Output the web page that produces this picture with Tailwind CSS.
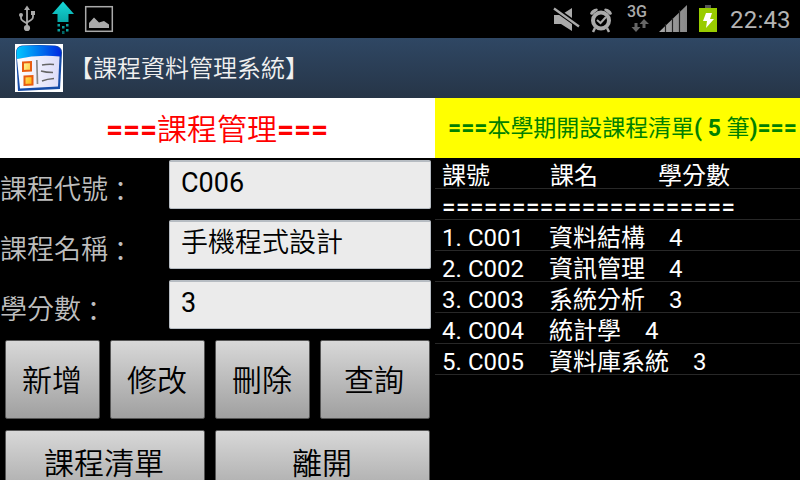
<!DOCTYPE html>
<html lang="zh-Hant">
<head>
<meta charset="utf-8">
<title>課程資料管理系統</title>
<script src="https://cdn.jsdelivr.net/npm/@tailwindcss/browser@4"></script>
</head>
<body class="w-[800px] h-[480px] overflow-hidden bg-black text-white font-['Roboto','Noto_Sans_CJK_TC',sans-serif]">
<div class="flex h-[480px] flex-col overflow-hidden">
  <!-- Status bar -->
  <header class="flex h-[38px] shrink-0 items-start justify-between bg-black">
    <svg class="h-[38px] w-[130px]" viewBox="0 0 130 38" fill="none">
      <defs><linearGradient id="up" x1="0" y1="0" x2="0" y2="1"><stop offset="0" stop-color="#16d8d8"/><stop offset="1" stop-color="#08a8a8"/></linearGradient></defs>
      <g stroke="#aaa" stroke-width="1.800"><path d="M27 9v18M21 15v3q0 2 2 3l4 2.500M33 14v3q0 2-2 3l-4 2.500"/></g>
      <g fill="#aaa"><path d="M27 5.500l3 4.500h-6z"/><circle cx="27" cy="28" r="3.100"/><circle cx="21" cy="15" r="2"/><path d="M31 11h4v4h-4z"/></g>
      <path d="M63 1.500L74 14h-5.500v8h-11v-8H52z" fill="url(#up)"/>
      <g fill="#0aa0a0"><path d="M57.500 24H60v2.500h-2.500zM66 24h2.500v2.500H66zM62 26h2.500v2.500H62zM57.500 29H60v2.500h-2.500zM66 29h2.500v2.500H66z"/><path fill="#066" d="M62 31h2.500v3H62z"/></g>
      <rect x="85.700" y="6.700" width="26.600" height="24.600" stroke="#aaa" stroke-width="1.500"/>
      <path d="M89 28v-5l5-5.500 5 5 5-1.500 5 3.500v3.500z" fill="#aaa"/>
    </svg>
    <div class="flex h-[38px]">
      <svg class="h-[38px] w-[70px]" viewBox="550 0 70 38" fill="none">
        <path d="M554 15h7l11-7v23l-11-7h-7z" fill="#aaa"/>
        <path d="M555 9l24 17" stroke="#000" stroke-width="5"/><path d="M554 8.500l25 18" stroke="#aaa" stroke-width="2.300"/>
        <circle cx="601" cy="20.500" r="8" stroke="#aaa" stroke-width="4"/>
        <path d="M597 20l3.500 3 5.500-6" stroke="#aaa" stroke-width="2"/>
        <path d="M590 14q1-5 7-5.500l1 1.500-6 5zM612 14q-1-5-7-5.500l-1 1.500 6 5z" fill="#aaa"/>
        <path d="M595 28l-2 4M607 28l2 4" stroke="#aaa" stroke-width="2.500"/>
      </svg>
      <div class="flex w-[35px] flex-col pl-[7px]">
        <span class="mt-[3px] h-[16px] text-[16px] leading-[18px] font-medium text-[#aaa]">3G</span>
        <svg class="h-[14px] w-[22px]" viewBox="0 0 22 14" fill="#666"><path d="M7.500 4h3v4h3L9 13 4.500 8h3zM15.500 9h3V5H22l-5-5-4.500 5h3z"/></svg>
      </div>
      <svg class="h-[38px] w-[75px]" viewBox="655 0 75 38">
        <defs><linearGradient id="sg" x1="0" x2="1"><stop offset="0" stop-color="#aaa"/><stop offset="1" stop-color="#888"/></linearGradient></defs>
        <path d="M659 32L687 5v27z" fill="url(#sg)"/>
        <path d="M665.500 24v8M672.500 18v14M679.500 10v22" stroke="#222" stroke-width="1.200"/>
        <path d="M705 5h6v3h-6z" fill="#555"/><path d="M699 8h18v24h-18z" fill="#99cc00"/>
        <path d="M706 13h6l-2 6h4l-8 9 1-7h-4z" fill="#fff"/>
      </svg>
      <time class="w-[70px] whitespace-nowrap text-[24px] leading-[41px] tracking-[0.200px] text-[#b4b4b4]">22:43</time>
    </div>
  </header>
  <!-- Title bar -->
  <div class="flex h-[60px] shrink-0 items-center bg-linear-to-b from-[#2f4764] to-[#263547] pl-[15px]">
    <svg class="h-[48px] w-[48px]" viewBox="0 0 48 48">
      <defs><linearGradient id="bl"><stop offset="0" stop-color="#00c8ff"/><stop offset="1" stop-color="#0028e0"/></linearGradient>
      <linearGradient id="pg"><stop offset="0" stop-color="#fff"/><stop offset="1" stop-color="#dcdcf8"/></linearGradient>
      <linearGradient id="or" x2="1" y2="1"><stop offset="0" stop-color="#fff8a0"/><stop offset="1" stop-color="#ffb000"/></linearGradient></defs>
      <path fill="#fff" d="M0 0h48v48H0z"/>
      <path d="M1 9Q1 2 7 1.500q17-1 33 0 7 1 7 7L45 45 3 47z" fill="#164ca8"/>
      <path d="M1.500 9Q1.500 2 8 2q16-1 31 0 7 1 7 6.500v4Q24 11 2 15z" fill="url(#bl)"/>
      <path d="M2 15Q24 10 44.500 12.500L43 42.500 5 44.500z" fill="url(#pg)"/>
      <path d="M8 18.500l8-.5v8.500l-8 .5zM9.500 32.500l8-.5v8.500l-8 .5z" fill="url(#or)" stroke="#e85c10" stroke-width="2"/>
      <path d="M21.800 16l.7 24" stroke="#888" stroke-width="1.700"/>
      <path d="M27 21q6-1 12-.5M26 27q5 1.500 12 1.500M27 37q5-2 12-2.500" stroke="#666" stroke-width="1.500" fill="none"/>
    </svg>
    <h1 class="ml-[6px] pt-[2px] text-[24px] leading-[58px] font-[350] text-[#f0f0f0]">【課程資料管理系統】</h1>
  </div>
  <main class="flex min-h-0 grow">
    <!-- Course form -->
    <section class="w-[435px] shrink-0">
      <h2 class="flex h-[60px] items-center justify-center bg-white pt-[3px] pr-[1px] text-[30px] leading-[60px] font-[350] text-[#f00]"><b class="font-bold tracking-[-0.200px]">===</b>課程管理<b class="font-bold tracking-[-0.200px]">===</b></h2>
      <form class="text-[27px]">
        <div class="flex h-[60px] pt-[2px]"><label class="w-[169px] leading-[60px] font-[350] text-[#bebebe]">課程代號<span class="relative top-[2px] -left-[1px]">：</span></label><div class="h-[49px] w-[262px] rounded-[2px] border border-t-2 border-[#b6bcc2] bg-[#ebebeb] pl-[11px] leading-[42px] text-black">C006</div></div>
        <div class="flex h-[60px] pt-[2px]"><label class="w-[169px] leading-[60px] font-[350] text-[#bebebe]">課程名稱<span class="relative top-[2px] -left-[1px]">：</span></label><div class="h-[49px] w-[262px] rounded-[2px] border border-t-2 border-[#b6bcc2] bg-[#ebebeb] pl-[11px] leading-[43px] font-[350] text-black">手機程式設計</div></div>
        <div class="flex h-[60px] pt-[2px]"><label class="w-[169px] leading-[60px] font-[350] text-[#bebebe]">學分數<span class="relative top-[2px] -left-[1px]">：</span></label><div class="h-[49px] w-[262px] rounded-[2px] border border-t-2 border-[#b6bcc2] bg-[#ebebeb] pl-[11px] leading-[42px] text-black">3</div></div>
        <div class="flex gap-[10px] pt-[2px] pl-[5px] text-[30px] leading-[78px] font-[350] text-black">
          <button type="button" class="h-[79px] w-[95px] rounded-[2px] border border-[#555] bg-linear-to-b from-[#d8d8d8] to-[#a0a0a0] pr-[1px] pt-[1px]">新增</button>
          <button type="button" class="h-[79px] w-[95px] rounded-[2px] border border-[#555] bg-linear-to-b from-[#d8d8d8] to-[#a0a0a0] pr-[1px] pt-[1px]">修改</button>
          <button type="button" class="h-[79px] w-[95px] rounded-[2px] border border-[#555] bg-linear-to-b from-[#d8d8d8] to-[#a0a0a0] pr-[1px] pt-[1px]">刪除</button>
          <button type="button" class="h-[79px] w-[110px] rounded-[2px] border border-[#555] bg-linear-to-b from-[#d8d8d8] to-[#a0a0a0] pr-[2px] pt-[1px]">查詢</button>
        </div>
        <div class="flex gap-[10px] pt-[11px] pl-[5px] text-[30px] leading-[62px] font-[350] text-black">
          <button type="button" class="h-[79px] w-[200px] rounded-[2px] border border-[#555] bg-linear-to-b from-[#d8d8d8] to-[#a0a0a0] pr-[2px] pb-[12px]">課程清單</button>
          <button type="button" class="h-[79px] w-[215px] rounded-[2px] border border-[#555] bg-linear-to-b from-[#d8d8d8] to-[#a0a0a0] pr-[1px] pb-[12px]">離開</button>
        </div>
      </form>
    </section>
    <!-- Course list -->
    <section class="w-[365px]">
      <h2 class="h-[60px] bg-[#ff0] pl-[13px] text-[23px] leading-[62px] tracking-[-0.050px] whitespace-pre font-normal text-[#008000]"><b>===</b>本學期開設課程清單<b>( 5 </b>筆<b>)===</b></h2>
      <ul class="text-[24px] leading-[37px] whitespace-nowrap">
        <li class="flex h-[31px] border-b border-[#282828] pl-[7px]"><span class="w-[108px]">課號</span><span class="w-[108px]">課名</span><span>學分數</span></li>
        <li class="h-[31px] border-b border-[#282828] pl-[7px] font-medium tracking-[0.480px]">=====================</li>
        <li class="flex h-[31px] border-b border-[#282828] pl-[7px]"><span class="w-[26px]">1.</span><span class="w-[81px]">C001</span><span class="w-[120px]">資料結構</span><span>4</span></li>
        <li class="flex h-[31px] border-b border-[#282828] pl-[7px]"><span class="w-[26px]">2.</span><span class="w-[81px]">C002</span><span class="w-[120px]">資訊管理</span><span>4</span></li>
        <li class="flex h-[31px] border-b border-[#282828] pl-[7px]"><span class="w-[26px]">3.</span><span class="w-[81px]">C003</span><span class="w-[120px]">系統分析</span><span>3</span></li>
        <li class="flex h-[31px] border-b border-[#282828] pl-[7px]"><span class="w-[26px]">4.</span><span class="w-[81px]">C004</span><span class="w-[96px]">統計學</span><span>4</span></li>
        <li class="flex h-[31px] border-b border-[#282828] pl-[7px]"><span class="w-[26px]">5.</span><span class="w-[81px]">C005</span><span class="w-[144px]">資料庫系統</span><span>3</span></li>
      </ul>
    </section>
  </main>
</div>
</body>
</html>
